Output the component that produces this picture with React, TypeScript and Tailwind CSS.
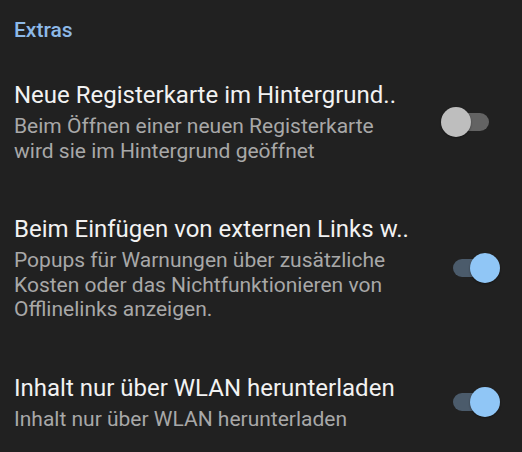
import { useState } from 'react'

const items = [
  {
    title: 'Neue Registerkarte im Hintergrund..',
    lines: ['Beim Öffnen einer neuen Registerkarte', 'wird sie im Hintergrund geöffnet'],
    on: false,
  },
  {
    title: 'Beim Einfügen von externen Links w..',
    lines: [
      'Popups für Warnungen über zusätzliche',
      'Kosten oder das Nichtfunktionieren von',
      'Offlinelinks anzeigen.',
    ],
    on: true,
  },
  {
    title: 'Inhalt nur über WLAN herunterladen',
    lines: ['Inhalt nur über WLAN herunterladen'],
    on: true,
  },
]

function Toggle({ on, onClick }: { on: boolean; onClick: () => void }) {
  return (
    <button onClick={onClick} className="relative w-[36px] h-[18px] shrink-0">
      <span
        className={
          on
            ? 'absolute inset-0 rounded-full bg-[#4b5b6b]'
            : 'absolute inset-0 rounded-full bg-[#636363]'
        }
      />
      <span
        className={
          on
            ? 'absolute top-[-6px] left-[17px] w-[30px] h-[30px] rounded-full bg-[#90c6f6] shadow-[0_1px_2px_rgba(0,0,0,0.4)]'
            : 'absolute top-[-6px] left-[-12px] w-[30px] h-[30px] rounded-full bg-[#bebebe] shadow-[0_1px_2px_rgba(0,0,0,0.4)]'
        }
      />
    </button>
  )
}

export default function App() {
  const [state, setState] = useState(items.map((i) => i.on))

  return (
    <div className="w-[522px] h-[452px] overflow-hidden bg-[#212121] font-['Roboto',sans-serif]">
      {/* Section header */}
      <div className="pt-[16px] pl-[14px] mb-[11px] text-[21px] leading-[28px] font-medium text-[#8db9e8]">
        Extras
      </div>

      {items.map((item, idx) => (
        <div key={item.title} className="flex items-center py-[26px] pl-[14px] pr-[33px]">
          <div className="flex-1 min-w-0">
            <div className="text-[24px] leading-[28px] text-[#f2f2f2] whitespace-nowrap">{item.title}</div>
            <div className="mt-[5px] text-[21px] leading-[24.5px] text-[#a8a8a8]">
              {item.lines.map((l) => (
                <div key={l} className="whitespace-nowrap">{l}</div>
              ))}
            </div>
          </div>
          <Toggle
            on={state[idx]}
            onClick={() => setState(state.map((s, i) => (i === idx ? !s : s)))}
          />
        </div>
      ))}
    </div>
  )
}
